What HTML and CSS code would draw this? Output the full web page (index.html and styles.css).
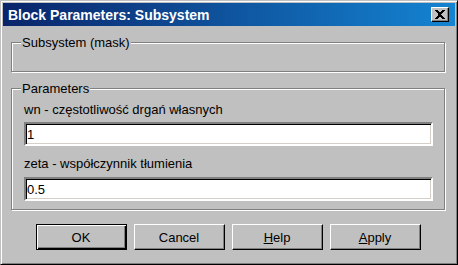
FILE: index.html
```html
<!DOCTYPE html>
<html>
    <head>
        <meta charset="utf-8" />
        <title>Block Parameters: Subsystem</title>
        <link rel="stylesheet" href="styles.css">
    </head>
    <body>
        <div class="window">
            <div class="titlebar">
                <span class="title">Block Parameters: Subsystem</span>
                <button class="close">
                    <svg width="10" height="9" viewBox="0 0 10 9" shape-rendering="crispEdges">
                        <path d="M0 0H3L5 3L7 0H10L6.5 4.5L10 9H7L5 6L3 9H0L3.5 4.5Z" fill="#000"/>
                    </svg>
                </button>
            </div>
            <div class="content">
                <fieldset class="group mask">
                    <legend>Subsystem (mask)</legend>
                </fieldset>
                <fieldset class="group params">
                    <legend>Parameters</legend>
                    <label class="field_label">wn - częstotliwość drgań własnych</label>
                    <input class="field" type="text" value="1">
                    <label class="field_label second">zeta - współczynnik tłumienia</label>
                    <input class="field" type="text" value="0.5">
                </fieldset>
                <div class="buttons">
                    <button class="btn default">OK</button>
                    <button class="btn">Cancel</button>
                    <button class="btn"><u>H</u>elp</button>
                    <button class="btn"><u>A</u>pply</button>
                </div>
            </div>
        </div>
    </body>
</html>
```

FILE: styles.css
```css
body{
    margin:0;
    background:#c0c0c0;
    font-family:"Liberation Sans", Arial, sans-serif;
    font-size:13px;
    color:#000;
}
/*外框 浅色在左上 深色在右下*/
.window{
    width:458px;
    height:265px;
    box-sizing:border-box;
    border:1px solid;
    border-color:#c0c0c0 #000 #000 #c0c0c0;
    box-shadow:inset 1px 1px #fff, inset -1px -1px #808080;
    padding:2px;
    background:#c0c0c0;
}
.titlebar{
    height:23px;
    display:flex;
    align-items:center;
    justify-content:space-between;
    padding:0 6px 0 5px;
    background:linear-gradient(to right, #0a246a, #1484d2);
    color:#fff;
    font-weight:bold;
    font-size:14px;
}
.close{
    width:18px;
    height:15px;
    padding:0;
    border:1px solid;
    border-color:#fff #000 #000 #fff;
    box-shadow:inset -1px -1px #808080;
    background:#c0c0c0;
    display:flex;
    align-items:center;
    justify-content:center;
}
.content{
    padding:9px 10px 0 8px;
}
.group{
    margin:0;
    border:1px solid #808080;
    box-shadow:1px 1px #fff, inset 1px 1px #fff;
    padding:0 11px 0 12px;
}
.group legend{
    padding:0 1px;
    margin-left:-3px;
    line-height:15px;
    background:#c0c0c0;
}
.mask{
    padding-bottom:21px;
}
.params{
    margin-top:9px;
    padding-top:6px;
    padding-bottom:8px;
}
.field_label{
    display:block;
    line-height:15px;
}
.field_label.second{
    margin-top:10px;
}
.field{
    display:block;
    width:100%;
    height:24px;
    box-sizing:border-box;
    margin-top:5px;
    padding:0 1px;
    border:2px solid;
    border-color:#808080 #fff #fff #808080;
    box-shadow:inset 1px 1px #000, inset -1px -1px #d4d0c8;
    background:#fff;
    font-family:inherit;
    font-size:13px;
    color:#000;
    outline:none;
}
.second + .field{
    margin-top:6px;
}
.buttons{
    display:flex;
    justify-content:center;
    gap:7px;
    margin-top:14px;
}
.btn{
    width:91px;
    height:26px;
    padding:0;
    border:1px solid;
    border-color:#fff #000 #000 #fff;
    box-shadow:inset -1px -1px #808080;
    background:#c0c0c0;
    font-family:inherit;
    font-size:13px;
    color:#000;
}
/*默认按钮外面多一圈黑框*/
.btn.default{
    border-color:#000;
    box-shadow:inset 1px 1px #fff, inset -1px -1px #000, inset -2px -2px #808080;
}
```
